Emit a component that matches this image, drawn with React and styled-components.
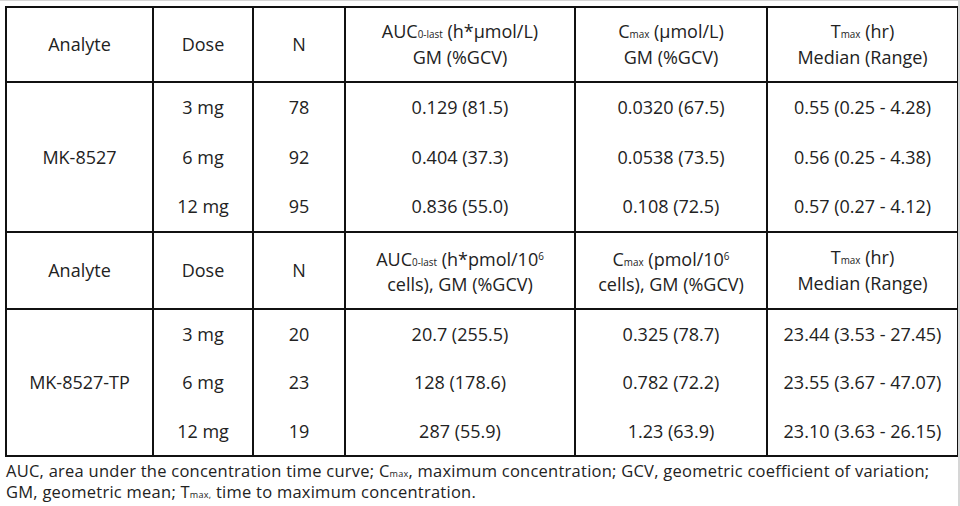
import React from "react";
import styled, { createGlobalStyle } from "styled-components";

const GlobalStyle = createGlobalStyle`
  body {
    margin: 0;
    background: #ffffff;
  }
`;

const Page = styled.div`
  width: 960px;
  height: 506px;
  box-sizing: border-box;
  border-top: 1px solid #d6d6d6;
  border-right: 2px solid #d6d6d6;
  padding: 5px 0 0 5px;
  overflow: hidden;
  font-family: "Open Sans", "Liberation Sans", sans-serif;
  color: #222222;
`;

const Table = styled.table`
  border-collapse: collapse;
  table-layout: fixed;
  width: 952px;
  font-size: 18px;
`;

const Row = styled.tr`
  height: ${(p) => p.$h}px;
`;

const Cell = styled.td`
  border-left: 2px solid #111;
  border-right: 2px solid #111;
  border-bottom: ${(p) => (p.$last ? "2px solid #111" : "none")};
  padding: 0 2px;
  text-align: center;
  vertical-align: middle;
  white-space: nowrap;
  line-height: 23px;
`;

const HeadCell = styled.td`
  border: 2px solid #111;
  padding: 0 2px;
  text-align: center;
  vertical-align: middle;
  white-space: nowrap;
  line-height: 23px;
`;

const Sub = styled.span`
  font-size: 0.55em;
  vertical-align: baseline;
`;

const Sup = styled.span`
  font-size: 0.55em;
  vertical-align: 0.6em;
`;

const Note = styled.div`
  margin-top: 5px;
  font-size: 16.5px;
  line-height: 18px;
  padding-left: 1px;
  letter-spacing: 0.25px;
`;

const NoteLine = styled.div`
  white-space: nowrap;
`;

const sections = [
  {
    analyte: "MK-8527",
    headH: 75,
    rowH: 50,
    auc: (
      <>
        AUC<Sub>0-last</Sub> (h*µmol/L)
        <br />
        GM (%GCV)
      </>
    ),
    cmax: (
      <>
        C<Sub>max</Sub> (µmol/L)
        <br />
        GM (%GCV)
      </>
    ),
    rows: [
      ["3 mg", "78", "0.129 (81.5)", "0.0320 (67.5)", "0.55 (0.25 - 4.28)"],
      ["6 mg", "92", "0.404 (37.3)", "0.0538 (73.5)", "0.56 (0.25 - 4.38)"],
      ["12 mg", "95", "0.836 (55.0)", "0.108 (72.5)", "0.57 (0.27 - 4.12)"],
    ],
  },
  {
    analyte: "MK-8527-TP",
    headH: 77,
    rowH: 49,
    auc: (
      <>
        AUC<Sub>0-last</Sub> (h*pmol/10<Sup>6</Sup>
        <br />
        cells), GM (%GCV)
      </>
    ),
    cmax: (
      <>
        C<Sub>max</Sub> (pmol/10<Sup>6</Sup>
        <br />
        cells), GM (%GCV)
      </>
    ),
    rows: [
      ["3 mg", "20", "20.7 (255.5)", "0.325 (78.7)", "23.44 (3.53 - 27.45)"],
      ["6 mg", "23", "128 (178.6)", "0.782 (72.2)", "23.55 (3.67 - 47.07)"],
      ["12 mg", "19", "287 (55.9)", "1.23 (63.9)", "23.10 (3.63 - 26.15)"],
    ],
  },
];

export default function App() {
  return (
    <>
      <GlobalStyle />
      <Page>
        <Table>
          <colgroup>
            <col style={{ width: 147 }} />
            <col style={{ width: 100 }} />
            <col style={{ width: 92 }} />
            <col style={{ width: 230 }} />
            <col style={{ width: 192 }} />
            <col style={{ width: 191 }} />
          </colgroup>
          {sections.map((s) => (
            <tbody key={s.analyte}>
              <Row $h={s.headH}>
                <HeadCell>Analyte</HeadCell>
                <HeadCell>Dose</HeadCell>
                <HeadCell>N</HeadCell>
                <HeadCell>{s.auc}</HeadCell>
                <HeadCell>{s.cmax}</HeadCell>
                <HeadCell>
                  T<Sub>max</Sub> (hr)
                  <br />
                  Median (Range)
                </HeadCell>
              </Row>
              {s.rows.map((r, i) => (
                <Row key={r[0]} $h={s.rowH}>
                  {i === 0 && (
                    <Cell rowSpan={3} $last>
                      {s.analyte}
                    </Cell>
                  )}
                  {r.map((v) => (
                    <Cell key={v} $last={i === 2}>
                      {v}
                    </Cell>
                  ))}
                </Row>
              ))}
            </tbody>
          ))}
        </Table>
        <Note>
          <NoteLine>
            AUC, area under the concentration time curve; C<Sub>max</Sub>, maximum
            concentration; GCV, geometric coefficient of variation;
          </NoteLine>
          <NoteLine>
            GM, geometric mean; T<Sub>max,</Sub> time to maximum concentration.
          </NoteLine>
        </Note>
      </Page>
    </>
  );
}
